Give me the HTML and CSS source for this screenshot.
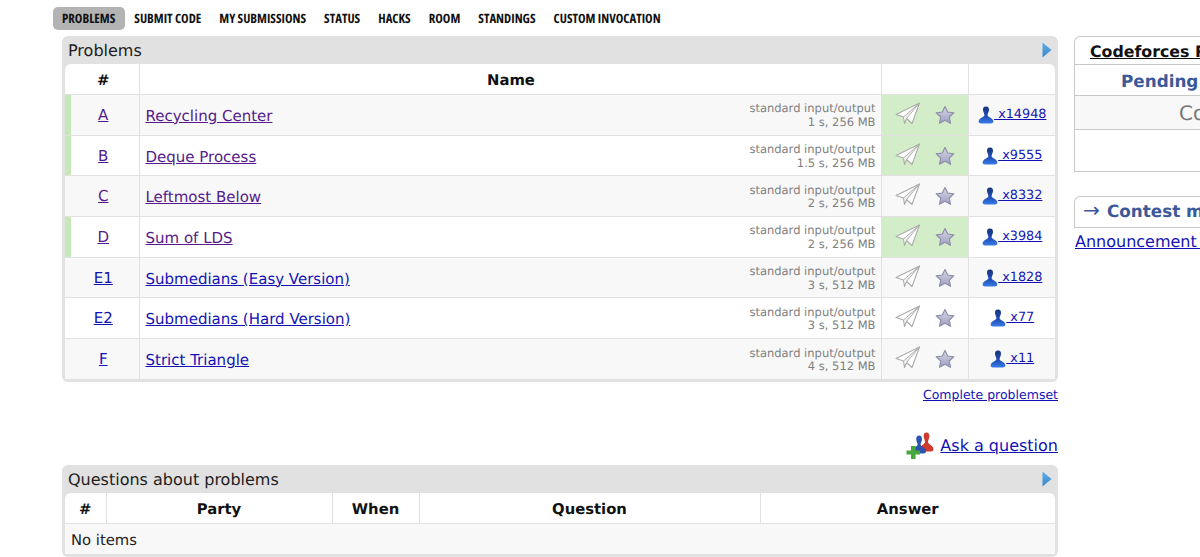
FILE: index.html
```html
<!DOCTYPE html>
<html lang="en">
<head>
<meta charset="utf-8">
<title>Problems</title>
<link rel="stylesheet" href="styles.css">
</head>
<body>
<svg class="defs" width="0" height="0" aria-hidden="true">
  <defs>
    <linearGradient id="userGrad" x1="0" y1="0" x2="0" y2="1"><stop offset="0" stop-color="#17347f"/><stop offset=".6" stop-color="#2050b8"/><stop offset="1" stop-color="#3a7ce8"/></linearGradient>
    <linearGradient id="starGrad" x1="0" y1="0" x2="0" y2="1"><stop offset="0" stop-color="#d8d8e0"/><stop offset="1" stop-color="#9d9dc8"/></linearGradient>
    <linearGradient id="arrowGrad" x1="0" y1="0" x2="0" y2="1"><stop offset="0" stop-color="#5cb0ea"/><stop offset="1" stop-color="#3a86c8"/></linearGradient>
    <symbol id="plane" viewBox="0 0 26 24"><path d="M1 12.500 24.500 1 17 21.500 11.500 16.500 9.500 21.500 8.500 15Z" fill="#fff" stroke="#a9aca8" stroke-width="1.100" stroke-linejoin="round"/><path d="M8.500 15 24.500 1 11.500 16.500" fill="#eee" stroke="#a9aca8" stroke-width=".9" stroke-linejoin="round"/></symbol>
    <symbol id="star" viewBox="0 0 20 20"><path d="M10 1.500 12.700 7 18.800 7.800 14.300 12 15.500 18.300 10 15.200 4.500 18.300 5.700 12 1.200 7.800 7.300 7Z" fill="url(#starGrad)" stroke="#8f8fa8" stroke-width="1.200" stroke-linejoin="round"/></symbol>
    <symbol id="user" viewBox="0 0 16 18"><path d="M8 .5C5.600.5 4.800 2.200 5 4.200 5.200 6.200 6.400 7.400 6.400 9 6.400 10.800 2.800 11.600 1.200 13.800.2 15.200.5 17.500 3 17.500H13C15.500 17.500 15.800 15.200 14.800 13.800 13.200 11.600 9.600 10.800 9.600 9 9.600 7.400 10.800 6.200 11 4.200 11.200 2.200 10.400.5 8 .5Z" fill="url(#userGrad)"/></symbol>
    <symbol id="arrow" viewBox="0 0 10 16"><path d="M.5.5 9.500 8 .5 15.500Z" fill="url(#arrowGrad)"/></symbol>
  </defs>
</svg>
<nav class="menu">
  <a class="menu-item active">PROBLEMS</a>
  <a class="menu-item">SUBMIT CODE</a>
  <a class="menu-item">MY SUBMISSIONS</a>
  <a class="menu-item">STATUS</a>
  <a class="menu-item">HACKS</a>
  <a class="menu-item">ROOM</a>
  <a class="menu-item">STANDINGS</a>
  <a class="menu-item">CUSTOM INVOCATION</a>
</nav>
<div class="page">
  <main class="content">
    <section class="panel">
      <div class="panel-title"><span>Problems</span><svg class="toggle"><use href="#arrow"/></svg></div>
      <div class="panel-body">
        <table class="problems">
          <colgroup><col class="c-id"><col class="c-name"><col class="c-act"><col class="c-users"></colgroup>
          <thead><tr><th class="th-id">#</th><th class="th-name">Name</th><th></th><th></th></tr></thead>
          <tbody>
            <tr class="odd solved">
              <td class="id"><a class="seen" href="#">A</a></td>
              <td class="name"><div class="name-row"><a class="seen" href="#">Recycling Center</a><div class="limits">standard input/output<br>1 s, 256 MB</div></div></td>
              <td class="act"><div class="act-row"><svg class="plane"><use href="#plane"/></svg><svg class="star"><use href="#star"/></svg></div></td>
              <td class="users"><a href="#"><svg class="user"><use href="#user"/></svg> x14948</a></td>
            </tr>
            <tr class="solved">
              <td class="id"><a class="seen" href="#">B</a></td>
              <td class="name"><div class="name-row"><a class="seen" href="#">Deque Process</a><div class="limits">standard input/output<br>1.5 s, 256 MB</div></div></td>
              <td class="act"><div class="act-row"><svg class="plane"><use href="#plane"/></svg><svg class="star"><use href="#star"/></svg></div></td>
              <td class="users"><a href="#"><svg class="user"><use href="#user"/></svg> x9555</a></td>
            </tr>
            <tr class="odd">
              <td class="id"><a class="seen" href="#">C</a></td>
              <td class="name"><div class="name-row"><a class="seen" href="#">Leftmost Below</a><div class="limits">standard input/output<br>2 s, 256 MB</div></div></td>
              <td class="act"><div class="act-row"><svg class="plane"><use href="#plane"/></svg><svg class="star"><use href="#star"/></svg></div></td>
              <td class="users"><a href="#"><svg class="user"><use href="#user"/></svg> x8332</a></td>
            </tr>
            <tr class="solved">
              <td class="id"><a class="seen" href="#">D</a></td>
              <td class="name"><div class="name-row"><a class="seen" href="#">Sum of LDS</a><div class="limits">standard input/output<br>2 s, 256 MB</div></div></td>
              <td class="act"><div class="act-row"><svg class="plane"><use href="#plane"/></svg><svg class="star"><use href="#star"/></svg></div></td>
              <td class="users"><a href="#"><svg class="user"><use href="#user"/></svg> x3984</a></td>
            </tr>
            <tr class="odd">
              <td class="id"><a href="#">E1</a></td>
              <td class="name"><div class="name-row"><a href="#">Submedians (Easy Version)</a><div class="limits">standard input/output<br>3 s, 512 MB</div></div></td>
              <td class="act"><div class="act-row"><svg class="plane"><use href="#plane"/></svg><svg class="star"><use href="#star"/></svg></div></td>
              <td class="users"><a href="#"><svg class="user"><use href="#user"/></svg> x1828</a></td>
            </tr>
            <tr>
              <td class="id"><a href="#">E2</a></td>
              <td class="name"><div class="name-row"><a href="#">Submedians (Hard Version)</a><div class="limits">standard input/output<br>3 s, 512 MB</div></div></td>
              <td class="act"><div class="act-row"><svg class="plane"><use href="#plane"/></svg><svg class="star"><use href="#star"/></svg></div></td>
              <td class="users"><a href="#"><svg class="user"><use href="#user"/></svg> x77</a></td>
            </tr>
            <tr class="odd">
              <td class="id"><a href="#">F</a></td>
              <td class="name"><div class="name-row"><a href="#">Strict Triangle</a><div class="limits">standard input/output<br>4 s, 512 MB</div></div></td>
              <td class="act"><div class="act-row"><svg class="plane"><use href="#plane"/></svg><svg class="star"><use href="#star"/></svg></div></td>
              <td class="users"><a href="#"><svg class="user"><use href="#user"/></svg> x11</a></td>
            </tr>
          </tbody>
        </table>
      </div>
    </section>
    <div class="complete"><a href="#">Complete problemset</a></div>
    <div class="ask">
      <svg class="ask-icon" viewBox="0 0 28 27">
        <path transform="translate(13 0) scale(.94 1.110)" d="M8 .5C5.600.5 4.800 2.200 5 4.200 5.200 6.200 6.400 7.400 6.400 9 6.400 10.800 2.800 11.600 1.200 13.800.2 15.200.5 17.500 3 17.500H13C15.500 17.500 15.800 15.200 14.800 13.800 13.200 11.600 9.600 10.800 9.600 9 9.600 7.400 10.800 6.200 11 4.200 11.200 2.200 10.400.5 8 .5Z" fill="#cf3a30"/>
        <path transform="translate(5.500 3) scale(.95 1.050)" d="M8 .5C5.600.5 4.800 2.200 5 4.200 5.200 6.200 6.400 7.400 6.400 9 6.400 10.800 2.800 11.600 1.200 13.800.2 15.200.5 17.500 3 17.500H13C15.500 17.500 15.800 15.200 14.800 13.800 13.200 11.600 9.600 10.800 9.600 9 9.600 7.400 10.800 6.200 11 4.200 11.200 2.200 10.400.5 8 .5Z" fill="#2a54ae"/>
        <path d="M5 14H9.500V18.500H14V22.500H9.500V27H5V22.500H.5V18.500H5Z" fill="#46a83a"/>
      </svg>
      <a href="#">Ask a question</a>
    </div>
    <section class="panel">
      <div class="panel-title"><span>Questions about problems</span><svg class="toggle"><use href="#arrow"/></svg></div>
      <div class="panel-body">
        <table class="questions">
          <colgroup><col class="q-id"><col class="q-party"><col class="q-when"><col class="q-question"><col class="q-answer"></colgroup>
          <thead><tr><th>#</th><th>Party</th><th>When</th><th>Question</th><th>Answer</th></tr></thead>
          <tbody><tr class="odd"><td colspan="5" class="none">No items</td></tr></tbody>
        </table>
      </div>
    </section>
  </main>
  <aside class="side">
    <div class="box">
      <div class="box-title"><a href="#">Codeforces Round</a></div>
      <div class="box-status">Pending System Test</div>
      <div class="box-state">Contest is running</div>
      <div class="box-empty"></div>
    </div>
    <div class="box-two">
      <div class="box-head"><span class="head-arrow">→</span>Contest materials</div>
      <div class="box-link"><a href="#">Announcement (en)</a></div>
    </div>
  </aside>
</div>
</body>
</html>
```

FILE: styles.css
```css
html, body {
  margin: 0;
  padding: 0;
  height: 557px;
  overflow: hidden;
  background: #fff;
  font-family: "DejaVu Sans", Verdana, sans-serif;
  color: #222;
  text-rendering: geometricPrecision;
}
.defs { position: absolute; }
a { color: #1313b5; }
a.seen { color: #551a8b; }

.menu {
  display: flex;
  align-items: center;
  height: 23px;
  margin: 7px 0 0 53px;
  font-family: "Open Sans", "Liberation Sans", sans-serif;
  font-stretch: 75%;
  font-weight: 700;
  font-size: 12.800px;
  color: #111;
}
.menu-item {
  padding: 0 9px;
  line-height: 23px;
  border-radius: 5px;
  color: #111;
}
.menu-item.active { background: #b3b3b3; padding-right: 10px; }

.page {
  display: flex;
  align-items: flex-start;
  width: 1400px;
  margin: 6px 0 0 62px;
}
.content { width: 996px; flex: none; }
.side { width: 320px; margin-left: 16px; flex: none; }

.panel {
  background: #e1e1e1;
  border-radius: 6px;
  padding: 0 3px 3px;
}
.panel-title {
  display: flex;
  justify-content: space-between;
  align-items: center;
  height: 28px;
  padding-left: 3px;
  font-size: 16px;
}
.toggle { width: 10px; height: 16px; margin-right: 3px; }
.panel-body {
  background: #fff;
  border-radius: 6px 6px 0 0;
  overflow: hidden;
}
table {
  width: 100%;
  table-layout: fixed;
  border-collapse: collapse;
}
th {
  height: 27px;
  padding: 3px 0 0;
  font-size: 14.800px;
  font-weight: 700;
  color: #111;
  text-align: center;
  border-left: 1px solid #e1e1e1;
  border-bottom: 1px solid #e1e1e1;
}
th:first-child { border-left: 0; }
td {
  padding: 0;
  border-left: 1px solid #e1e1e1;
  border-bottom: 1px solid #e1e1e1;
}
td:first-child { border-left: 0; }
tbody tr:last-child td { border-bottom: 0; }
tr.odd td { background: #f8f8f8; }

.c-id { width: 74px; }
.c-act { width: 87px; }
.c-users { width: 87px; }
.problems tbody tr { height: 40.700px; }
th.th-id { padding-left: 3px; }
th.th-name { padding-left: 2px; }
.id { text-align: center; font-size: 15px; padding-left: 3px; }
tr.solved td.id { box-shadow: inset 6px 0 0 #c6e8b6; }
.name { padding: 2px 5px 0 6px; font-size: 15px; }
.name-row {
  display: flex;
  justify-content: space-between;
  align-items: center;
}
.limits {
  text-align: right;
  font-size: 11.500px;
  line-height: 13.500px;
  color: #808080;
}
tr.solved td.act { background: #d4edc9; }
.act-row {
  display: flex;
  align-items: center;
  justify-content: flex-start;
  padding-left: 13px;
}
.plane { width: 26px; height: 24px; margin-top: -2px; }
.star { width: 20px; height: 20px; margin-left: 14px; }
.users { text-align: center; font-size: 12.800px; padding-left: 1px; }
.user { width: 16px; height: 18px; vertical-align: -6px; }

.complete {
  text-align: right;
  font-size: 12.500px;
  line-height: 16px;
  margin-top: 5px;
}
.ask {
  display: flex;
  justify-content: flex-end;
  align-items: center;
  gap: 6px;
  margin-top: 28px;
  height: 28px;
  font-size: 16px;
  margin-bottom: 6px;
}
.ask-icon { width: 28px; height: 27px; }

.q-id { width: 41px; }
.q-party { width: 226px; }
.q-when { width: 87px; }
.q-question { width: 341px; }
.none { height: 28px; padding: 2px 0 0 6px; font-size: 14.800px; color: #222; }

.box {
  border: 1px solid #c8c8c8;
  border-right: 0;
  border-radius: 6px 0 0 0;
  font-size: 16.800px;
}
.box-title {
  height: 27px;
  line-height: 29px;
  padding-left: 15px;
  font-size: 15.800px;
  font-weight: 700;
  border-bottom: 1px solid #c8c8c8;
}
.box-title a { color: #111; }
.box-status {
  height: 30px;
  line-height: 32px;
  padding-left: 46px;
  font-weight: 700;
  color: #3b5998;
  border-bottom: 1px solid #c8c8c8;
}
.box-state {
  height: 33px;
  line-height: 35px;
  padding-left: 104px;
  font-size: 20px;
  color: #777;
  background: #f8f8f8;
  border-bottom: 1px solid #c8c8c8;
}
.box-empty { height: 41px; }
.box-two { margin-top: 24px; }
.box-head {
  height: 30px;
  line-height: 28px;
  padding-left: 8px;
  font-size: 16.800px;
  font-weight: 700;
  color: #3b5998;
  border: 1px solid #c8c8c8;
  border-right: 0;
  border-radius: 6px 0 0 0;
}
.head-arrow {
  display: inline-block;
  width: 24px;
  font-weight: 400;
  font-size: 20px;
  line-height: 20px;
  color: #3b5998;
}
.box-link { line-height: 27px; font-size: 16px; padding-left: 1px; }
```
